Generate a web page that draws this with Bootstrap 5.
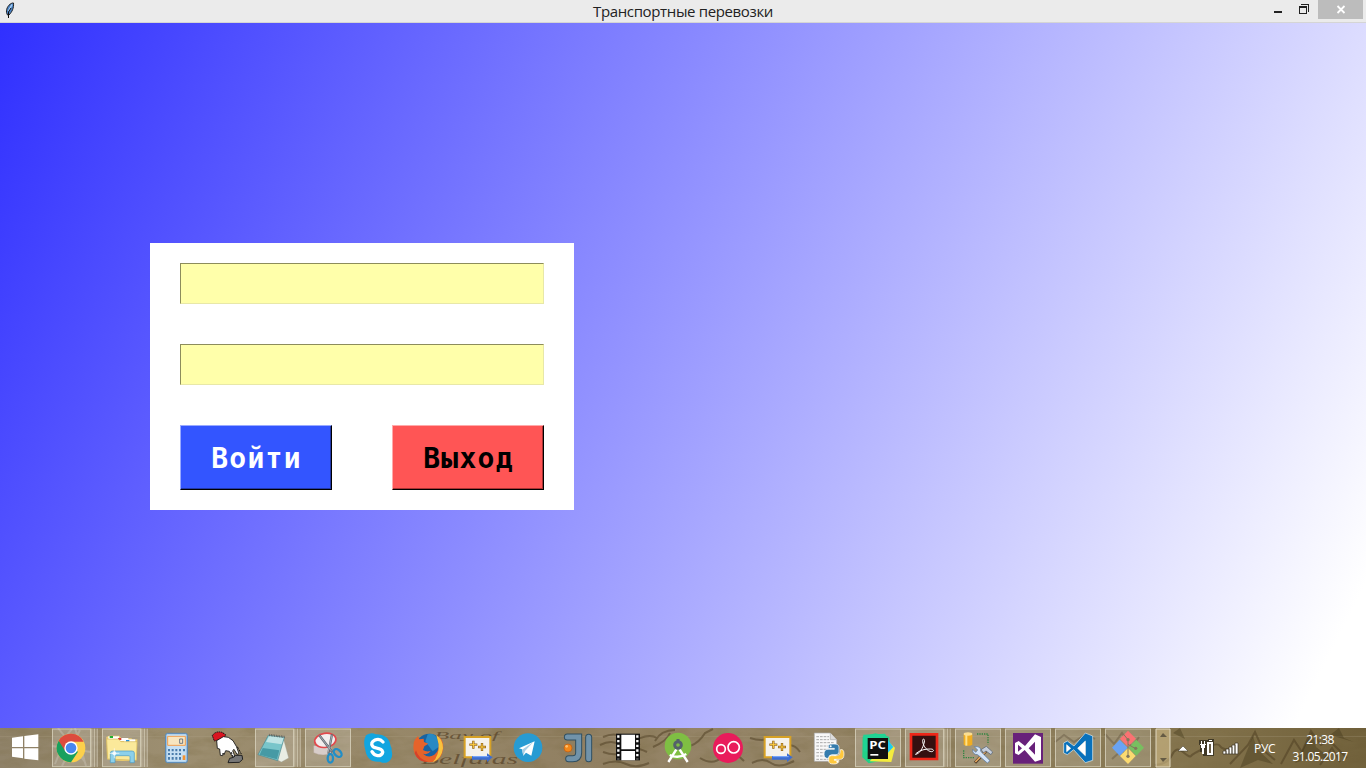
<!DOCTYPE html>
<html lang="ru">
<head>
<meta charset="utf-8">
<title>Транспортные перевозки</title>
<link href="https://cdn.jsdelivr.net/npm/bootstrap@5.3.0/dist/css/bootstrap.min.css" rel="stylesheet">
<script src="https://cdn.jsdelivr.net/npm/bootstrap@5.3.0/dist/js/bootstrap.bundle.min.js"></script>
<style>
body{height:768px;font-family:"Open Sans","Noto Sans",sans-serif}
.titlebar{height:23px;background:#ebebeb;border-bottom:1px solid #d5d5d5;color:#222}
.side{width:110px;height:22px}
.caption{font-size:15px;line-height:22px;letter-spacing:-.36px}
.client{background:linear-gradient(116.3deg,#3030ff 0%,#fff 95.8%);padding:220px 0 0 150px}
.login{width:424px;height:267px;background:#fff;padding:20px 30px}
.entry{height:41px;background:#ffa;border:1px solid #8c8c5c;border-right-color:#e8e8a8;border-bottom-color:#e8e8a8;border-radius:0;margin-bottom:40px}
.act{width:152px;height:65px;border-radius:0;border:1px solid #000;font:bold 28px/61px "DejaVu Sans Mono",monospace;letter-spacing:1.25px;padding:1px 0 0 1px}
.enter{background:#35f;color:#fff;border-top-color:#99aaff;border-left-color:#99aaff;box-shadow:inset -1px -1px #2238a8}
.leave{background:#f55;color:#000;border-top-color:#faa;border-left-color:#faa;box-shadow:inset -1px -1px #a33}
.taskbar{height:40px;background:linear-gradient(90deg,#90836a,#9c8e70 12%,#998a6b 25%,#918062 42%,#97876a 58%,#90815f 75%,#83734c 88%,#6f5f39)}
.taskbar svg{flex:none;display:block}
.slot{width:46px;margin-right:4px}
.tray{font-size:12px;color:#fff;line-height:17px;letter-spacing:-.6px}
</style>
</head>
<body class="d-flex flex-column overflow-hidden m-0">
<header class="titlebar d-flex justify-content-between">
  <svg class="side" viewBox="0 0 110 22"><path d="M12.500 3C9 4 6 8 6.500 12.500L7.500 15 9 15C12 12 14 8 13.500 3Z" fill="#4a82c4" stroke="#222" stroke-width="1"/><path d="M12 4.500L8.500 11" stroke="#a8d0f6" stroke-width="1.500"/><path d="M11 8L8.500 12V18" stroke="#111" fill="none"/></svg>
  <div class="caption">Транспортные перевозки</div>
  <svg class="side" viewBox="1256 0 110 22" shape-rendering="crispEdges"><path d="M1274 11h8v2h-8z" fill="#222"/><path d="M1299.500 6.500h7v7h-7z" fill="none" stroke="#222"/><path d="M1299 6h8v2h-8zM1301 4h8v1h-8zM1308 4h1v8h-1z" fill="#222"/><path d="M1318 0h45v19h-45z" fill="#bcbcbc"/><path d="M1337.500 6l7 7m0-7l-7 7" stroke="#fff" stroke-width="1.800" shape-rendering="auto"/></svg>
</header>
<main class="client flex-grow-1">
  <form class="login">
    <input class="entry d-block w-100" type="text" aria-label="Логин">
    <input class="entry d-block w-100" type="password" aria-label="Пароль">
    <div class="d-flex justify-content-between">
      <button type="button" class="btn act enter">Войти</button>
      <button type="button" class="btn act leave">Выход</button>
    </div>
  </form>
</main>
<footer class="taskbar d-flex position-relative overflow-hidden">
  <svg class="position-absolute top-0 start-0" width="1366" height="40" viewBox="0 0 1366 40">
    <defs>
      <filter id="grain" x="0" y="0" width="100%" height="100%"><feTurbulence type="fractalNoise" baseFrequency=".035 .09" numOctaves="4" seed="8"/><feColorMatrix values="0 0 0 0 .2  0 0 0 0 .15  0 0 0 0 .06  1.600 0 0 0 -.62"/></filter>
      <g id="frame"><rect x="1.500" y="15" width="135" height="113" fill="#fff" fill-opacity=".17" stroke="#ded8c4" stroke-opacity=".75" stroke-width="3"/></g>
      <g id="stack" stroke="#ded8c4" stroke-opacity=".75" stroke-width="3" fill="#fff" fill-opacity=".17"><rect x="1.500" y="15" width="114" height="113"/><path d="M120 14h7v115h-7zM130 14h8v115h-8z" stroke="none"/><path d="M127.500 14v115M138 14v115M119 14v115" stroke-width="2.500"/></g>
    </defs>
    <rect width="1366" height="40" filter="url(#grain)" opacity=".5"/>
    <path d="M0 8.500H1366" stroke="#b1a488" stroke-opacity=".25"/>
    <g fill="none" stroke="#4c3c20" stroke-opacity=".5" stroke-width="2">
      <path d="M55 36L66 8 72 1M75 0L86 38M58 0L85 34M62 38L80 2M52 18L91 24" stroke="#fff" stroke-opacity=".18"/>
      <path d="M603 9q12-5 19 0t18 1 17 0M600 17q12-6 20 0t20-1M603 24q14 5 22-1t22 1M603 36q13-5 23 0t23-1M655 13q6-11 20-11M653 19q14-6 17-14M690 18q9-3 15-13l8-4M700 30q13 8 22-1t22 4M750 10q12 4 21 0 6 14 14 9t15 5M752 35q11-6 19 0t23-2"/>
      <path d="M1055 14l9-7 10 7 12-8 9 5M1105 6l9 10 8-11 10 14 7-10M1112 31l10-9 6 8M1155 37q13-1 17-10t11-3 8 4 14-8 15-2 14 4M1230 36l18-19 7-13 8 18 12 10M1281 36l13-24 8 12 9-21 10 14 8-5 18 18M1320 37l12-17 8 14"/>
    </g>
    <path d="M1240 40l13-32 4 13 16 15-15-4zM1295 35l17-31 4 15 17 13-20-3zM1173 5l7-5 5 11zM1330 7l9-7 5 10 10 4z" fill="#403418" fill-opacity=".38"/>
    <g font-family="Liberation Serif" font-style="italic" fill="#4b361b" fill-opacity=".6"><text x="434" y="11" font-size="11" textLength="65" lengthAdjust="spacingAndGlyphs">Bay of</text><text x="421" y="36" font-size="15" textLength="97" lengthAdjust="spacingAndGlyphs">Belfalas</text></g>
  </svg>
  <div class="d-flex position-relative flex-shrink-0">
    <svg width="52" height="40" viewBox="0 12 156 120"><path d="M36 41L69 37V69H36zM73 36L115 31V69H73zM36 73H69V103L36 98zM73 73H115V109L73 104z" fill="#fff"/></svg>
    <svg class="slot" height="40" viewBox="156 12 138 120"><use href="#stack" x="156"/><circle cx="213" cy="72" r="43" fill="#fcd04b"/><path d="M213 72L176 50A43 43 0 0 0 213 115L234 83z" fill="#18a05e"/><path d="M176 50A43 43 0 0 1 251 53H213L195 80z" fill="#dc4b3e"/><circle cx="213" cy="72" r="20" fill="#fff"/><circle cx="213" cy="72" r="16" fill="#4887ef"/></svg>
    <svg class="slot" style="margin-right:7px" height="40" viewBox="306 12 138 120"><use href="#stack" x="306"/><path d="M319 39l8-4h31l6 8h30l5 5 13-2-2 62q-50 7-89-2z" fill="#edce70"/><path d="M325 37h32v9h-32z" fill="#fff"/><path d="M329 36h10v6h-10z" fill="#20b030"/><path d="M350 42h35v9h-35z" fill="#fff"/><path d="M354 42h10v6h-10z" fill="#d43c34"/><path d="M372 46h34v14h-34z" fill="#fff"/><path d="M378 48h10v5h-10z" fill="#2a91d5"/><path d="M320 45h35l8 8h48l-2 56-86-4z" fill="#fbe99a" stroke="#d3b75b" stroke-width="2"/><path d="M331 116V87q0-6 7-6h58q7 0 7 6v29h-13V98q0-3-6-3h-33q-6 0-6 3v18z" fill="#8cd0ea" stroke="#4a9ac4" stroke-width="2"/><path d="M343 73v30M328 88h30" stroke="#fff" stroke-width="2"/><circle cx="343" cy="88" r="6" fill="#fff" fill-opacity=".8"/></svg>
    <svg class="slot" height="40" viewBox="465 12 138 120"><rect x="497" y="28" width="65" height="88" rx="6" fill="#a7cceb" stroke="#5386b6" stroke-width="3"/><path d="M502 32h55v80h-55z" fill="#c7e0f3"/><path d="M503 37h53v27h-53z" fill="#f8e5bf" stroke="#f19e50" stroke-width="3"/><path d="M539 45h9v13h-9z" fill="none" stroke="#546578" stroke-width="2.500"/><g fill="#4a7cab"><path d="M504 75h6v7h-6zM515 75h6v7h-6zM526 75h6v7h-6zM537 75h6v7h-6zM549 75h6v7h-6zM504 87h6v6h-6zM515 87h6v6h-6zM526 87h6v6h-6zM537 87h6v6h-6zM504 99h6v8h-6zM515 99h6v8h-6zM526 99h6v8h-6zM537 99h6v8h-6z"/></g><path d="M548 94h8v14h-8z" fill="#f39331"/></svg>
    <svg class="slot" height="40" viewBox="15 12 138 120"><path d="M37 35q9-15 29-10l11 7-5 11-29 8z" fill="#d91520" stroke="#111" stroke-width="3" stroke-dasharray="4 2"/><path d="M50 50l20-12 15 2 14 10 10 17 8 22-6 2-9-15-4 4 9 23-5 3-14-24-11-2-5 12-3-5-1 8-7-1-2-19-7-2z" fill="#fff" stroke="#111" stroke-width="2.500"/><path d="M93 84l12 25M112 68l12 22" stroke="#111" stroke-width="3" stroke-dasharray="7 3"/><path d="M84 116l5-13 12-3 6-6h19l2 12-10 9z" fill="#777" stroke="#222" stroke-width="3"/></svg>
    <svg class="slot" height="40" viewBox="165 12 138 120"><use href="#stack" x="165"/><path d="M248 36l18 66-22 12-17-9z" fill="#e9ede4" stroke="#9ca195"/><path d="M205 34l48 6-20 70-59-18z" fill="#79c5ca" stroke="#4e858a" stroke-width="2"/><path d="M207 36l44 5-6 20-47-7z" fill="#c0e4e4"/><path d="M188 72l50 7-7 27-52-14z" fill="#469aa5"/><path d="M208 33l46 6" stroke="#555" stroke-width="7" stroke-dasharray="2 3"/></svg>
    <svg class="slot" height="40" viewBox="315 12 138 120"><use href="#frame" x="315"/><path d="M341 65v21q29 13 53 1V60z" fill="#d8cdca" stroke="#ac9a93"/><ellipse cx="376" cy="49" rx="32" ry="21" fill="#f2eeee" stroke="#e2484c" stroke-width="5" transform="rotate(-9 376 49)"/><path d="M358 34l39 51M396 31l-11 58" stroke="#646a72" stroke-width="7"/><path d="M359 35l36 47M396 33l-12 53" stroke="#c2c8ce" stroke-width="2"/><ellipse cx="391" cy="103" rx="8" ry="13" fill="none" stroke="#218ec7" stroke-width="7"/><ellipse cx="413" cy="87" rx="9" ry="14" fill="none" stroke="#218ec7" stroke-width="7" transform="rotate(-45 413 87)"/></svg>
    <svg class="slot" height="40" viewBox="465 12 138 120"><path d="M498 34q16-10 29-3 39-1 45 35 4 6 3 13 6 24-10 34-12 7-25 0-38 4-44-35-8-25 2-44z" fill="#12a5e0"/><path d="M549 54q-10-12-24-6-15 7-7 19 3 4 18 7 15 4 11 14-5 9-17 6-8-1-14-11" fill="none" stroke="#fff" stroke-width="10" stroke-linecap="round"/></svg>
    <svg class="slot" height="40" viewBox="15 12 138 120"><circle cx="88" cy="70" r="41" fill="#1763a2"/><path d="M83 31q17-6 27 9l9 27-21 15-22-30z" fill="#2789c4"/><path d="M46 45l8-9 4 10 13-2 1 10 13 5-12 8-4 11q10 7 23 3-8 13-23 8 16 15 34 3 19-14 12-40l6 3q-2-17-9-23 18 14 18 36-2 45-43 47-46-6-47-47-1-14 6-23z" fill="#e5632a"/><path d="M109 34q20 11 20 39-4 32-31 42 20-20 18-54z" fill="#f8c23d"/><path d="M48 79q8 28 37 34-31 3-41-25z" fill="#d6412a"/></svg>
    <svg class="slot" height="40" viewBox="165 12 138 120"><g id="plus"><path d="M194 39h77v61h-77z" fill="#f5f2ec" stroke="#d6a126" stroke-width="6"/><path d="M220 50v24m-12-12h24M246 57v24m-12-12h24" stroke="#94651a" stroke-width="7"/><path d="M220 52v20m-10-10h20M246 59v20m-10-10h20" stroke="#ffcf43" stroke-width="3"/><path d="M216 96h45v-8l17 12-17 14v-7h-45z" fill="#3c6dd1"/><path d="M218 98h48" stroke="#83afff" stroke-width="3"/></g></svg>
    <svg class="slot" height="40" viewBox="315 12 138 120"><circle cx="384" cy="71" r="43" fill="#279bd3"/><path d="M357 73l47-21-10 43-16-9-8 9-4-19z" fill="#fff"/><path d="M366 77l34-23-25 27-5 14z" fill="#abcfe4"/></svg>
    <svg class="slot" height="40" viewBox="465 12 138 120"><g fill="none" stroke="#304f61" stroke-width="21" stroke-linecap="round"><path d="M502 39h34v47q0 18-18 18h-12M566 40v64"/></g><g fill="none" stroke="#7193aa" stroke-width="15" stroke-linecap="round"><path d="M502 39h34v47q0 18-18 18h-12M566 40v64"/></g><circle cx="504" cy="72" r="12" fill="#f28719" stroke="#bd5b11" stroke-width="2"/><circle cx="500" cy="67" r="4" fill="#ffc16d"/></svg>
    <svg class="slot" height="40" viewBox="15 12 138 120"><path d="M48 29h72v80H48z" fill="#111"/><path d="M64 32h41v44H64zM64 81h41v28H64z" fill="#fff"/><path d="M55 34v72M112 34v72" stroke="#fff" stroke-width="7" stroke-dasharray="7 7"/></svg>
    <svg class="slot" height="40" viewBox="165 12 138 120"><circle cx="234" cy="66" r="40" fill="#7fbe43"/><path d="M230 75l-25 39M238 75l25 39M209 93q26 12 50-3" fill="none" stroke="#fff" stroke-width="7"/><path d="M234 45v12" stroke="#54616b" stroke-width="9"/><circle cx="234" cy="63" r="10" fill="none" stroke="#54616b" stroke-width="9"/></svg>
    <svg class="slot" height="40" viewBox="315 12 138 120"><circle cx="384" cy="72" r="45" fill="#e91b5b"/><circle cx="363" cy="75" r="13" fill="none" stroke="#fff" stroke-width="5"/><circle cx="401" cy="70" r="17" fill="none" stroke="#fff" stroke-width="5"/></svg>
    <svg class="slot" height="40" viewBox="465 12 138 120"><use href="#plus" x="300"/></svg>
    <svg class="slot" height="40" viewBox="15 12 138 120"><path d="M43 27h48l19 20v65H43z" fill="#f8f8f8" stroke="#aaa" stroke-width="2"/><path d="M91 27v20h19" fill="#ddd" stroke="#aaa" stroke-width="2"/><path d="M49 38h38M49 47h38M49 56h55M49 66h55M49 76h55M49 86h55M49 96h55M49 106h55" stroke="#aaa" stroke-width="3" stroke-dasharray="8 3"/><path d="M85 64q4-5 16-4 16-1 16 10v14q0 8-9 8H96q-10 0-10 11-13 2-14-12 0-15 12-15h19v-3H85z" fill="#357cad" stroke="#fff" stroke-width="2"/><path d="M121 77q11-3 11 13 0 16-11 16h-18v3h14q0 11-16 11-15 0-15-9v-9q0-7 8-7h15q12 0 12-12z" fill="#ffc83d" stroke="#fff" stroke-width="2"/><circle cx="92" cy="67" r="3" fill="#fff"/><circle cx="112" cy="113" r="3" fill="#fff"/></svg>
    <svg class="slot" height="40" viewBox="165 12 138 120"><use href="#frame" x="165"/><path d="M188 38l38-10 42 10-2 68-60 12-19-18z" fill="#22d087"/><path d="M190 32l65-3 14 22-3 38-75-7z" fill="#20d394"/><path d="M263 51l22 20-11 43-65-2z" fill="#f4ec3d"/><path d="M263 47l17 22-17 18z" fill="#1ec9f1"/><path d="M203 42h61v63h-61z" fill="#101010"/><text x="208" y="75" font-family="Open Sans" font-weight="bold" font-size="31" fill="#fff" textLength="50" lengthAdjust="spacingAndGlyphs">PC</text><path d="M211 90h24v5h-24z" fill="#fff"/></svg>
    <svg class="slot" height="40" viewBox="315 12 138 120"><use href="#stack" x="315"/><path d="M333 31h78v74h-78z" fill="#351010" stroke="#ed2618" stroke-width="8"/><path d="M347 91c12-2 22-19 26-37 2-12-6-11-5-2 1 15 15 31 27 31 8-1 7-8-3-8-16-1-32 4-42 12-3 2-4 5-3 4z" fill="none" stroke="#fff" stroke-width="3"/></svg>
    <svg class="slot" height="40" viewBox="465 12 138 120"><use href="#frame" x="465"/><path d="M491 31q13-7 26 0v31q-13 7-26 0z" fill="#f0ad22"/><path d="M496 31h6v34h-6z" fill="#ffe187"/><ellipse cx="504" cy="30" rx="13" ry="5" fill="#fbde91"/><path d="M531 30h33v31M491 79v22h31" fill="none" stroke="#328541" stroke-width="4" stroke-dasharray="4 3"/><path d="M558 81l-33 35" stroke="#4b3928" stroke-width="9"/><path d="M557 82l-31 32" stroke="#e8a85e" stroke-width="5"/><path d="M543 77l16-10 19 17-5 8-15-11-7 5z" fill="#c6cedb" stroke="#4d5a6d" stroke-width="2"/><path d="M523 68l10 10-6 7-9-9q-1 16 15 16l29 25 8-7-28-28q3-16-19-14z" fill="#d5e5f8" stroke="#4e73a1" stroke-width="2"/></svg>
    <svg class="slot" height="40" viewBox="15 12 138 120"><use href="#frame" x="15"/><path d="M39 27h90v92H39z" fill="#68217a"/><path fill-rule="evenodd" d="M45 57l11-6 19 15 30-35 18 8v68l-18 6-31-35-18 15-11-5zM54 62v21l12-10zM105 53L86 73l19 19z" fill="#fff"/></svg>
    <svg class="slot" height="40" viewBox="165 12 138 120"><use href="#frame" x="165"/><path fill-rule="evenodd" d="M191 57l11-6 20 15 34-39 22 9v73l-22 7-35-39-19 15-11-5zM200 62v21l12-10zM256 51L233 73l23 22z" fill="#0871bc" stroke="#eaf0ee" stroke-width="2"/><path d="M200 62v21l12-10zM256 51L233 73l23 22z" fill="#fff"/></svg>
    <svg class="slot" height="40" viewBox="315 12 138 120"><use href="#frame" x="315"/><path d="M384 20l24 24-24 24-24-24z" fill="#fa7272"/><path d="M359 47l24 24-24 24-23-24z" fill="#69a3f4"/><path d="M409 47l23 24-23 24-24-24z" fill="#78bf60"/><path d="M384 72l23 24-23 24-24-24z" fill="#fbda70"/><path d="M370 30l14 17v49M384 61l21 12" fill="none" stroke="#82775c" stroke-width="3"/><circle cx="384" cy="47" r="5" fill="#82775c"/><circle cx="384" cy="97" r="5" fill="#82775c"/><circle cx="407" cy="73" r="5" fill="#82775c"/></svg>
    <svg width="17" height="40" viewBox="0 0 17 40"><path d="M1 1h14v38H1z" fill="#d2bd88" fill-opacity=".6" stroke="#e0d8bf"/><path d="M5 9l3-4 4 4zM5 30h7l-4 4z" fill="#655b44"/></svg>
    <svg width="75" height="40" viewBox="1172 0 75 40"><path d="M1178 23l5-5 5 5z" fill="#fff" stroke="#343022" stroke-width=".5"/><path d="M1199 12h9v-1h6v17h-11v-4h-3v-7h-1z" fill="#302a1d" fill-opacity=".8"/><path d="M1208 14h5v13h-6v-13zM1209 12h3v1h-3z" fill="#fff"/><path d="M1209 16h2v9h-2z" fill="#6b6048"/><path d="M1201 13h1v3h-1zM1204 13h1v3h-1zM1200 16h6v1h-6zM1201 17h4v3h-4zM1202 20h2v6h-2z" fill="#fff"/><path d="M1223 23h3v3h-3zM1226 21h3v5h-3zM1229 19h3v7h-3zM1232 17h3v9h-3zM1235 15h3v11h-3z" fill="#fff" stroke="#3c3425" stroke-width=".7"/></svg>
    <div class="tray d-flex align-items-center" style="padding-left:7px">
      <span style="width:31px;letter-spacing:-.3px">РУС</span>
      <div class="text-center" style="width:70px"><div>21:38</div><div>31.05.2017</div></div>
    </div>
  </div>
</footer>
</body>
</html>
